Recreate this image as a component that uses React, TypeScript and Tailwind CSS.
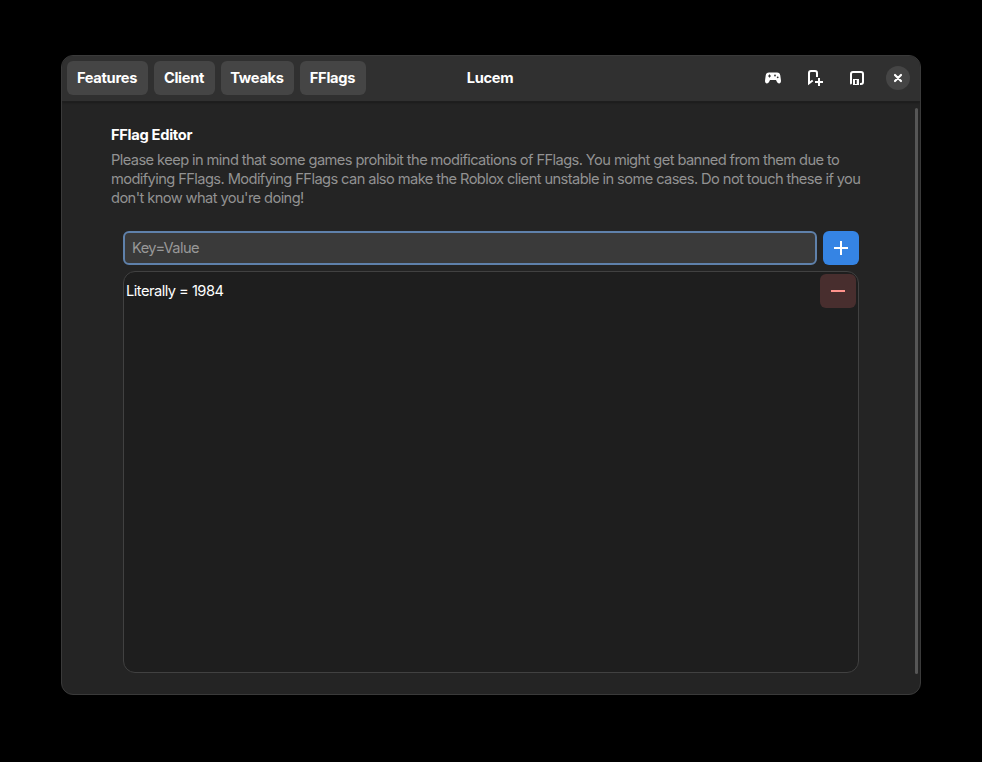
const tabs = [
  { label: 'Features', width: 'w-[81px]' },
  { label: 'Client', width: 'w-[61px]' },
  { label: 'Tweaks', width: 'w-[73px]' },
  { label: 'FFlags', width: 'w-[66px]' },
];

function GamepadIcon() {
  return (
    <svg width="16" height="16" viewBox="0 0 16 16" fill="none">
      <path
        d="M4 2.500h8c2 0 3 1 3.300 3l.6 4.500c.3 2-.4 3.400-1.800 3.400-1 0-1.600-.5-2.100-1.400L11 10H5l-1 2c-.5.900-1.100 1.400-2.100 1.400C.5 13.400-.2 12 .1 10l.6-4.500C1 3.500 2 2.500 4 2.500Z"
        fill="#fff"
      />
      <path d="M4.500 4.500v3M3 6h3" stroke="#303030" strokeWidth="1" />
      <circle cx="10" cy="5.500" r=".9" fill="#303030" />
      <circle cx="12.700" cy="7.300" r=".9" fill="#303030" />
    </svg>
  );
}

function BookmarkAddIcon() {
  return (
    <svg width="16" height="16" viewBox="0 0 16 16" fill="none" stroke="#fff" strokeWidth="2">
      <path d="M10 7V3a2 2 0 0 0-2-2H4a2 2 0 0 0-2 2v10.200L5.700 10.500" />
      <path d="M12 8v8M8 12h8" />
    </svg>
  );
}

function WindowIcon() {
  return (
    <svg width="16" height="16" viewBox="0 0 16 16" fill="none" stroke="#fff">
      <path d="M2.500 14A1.500 1.500 0 0 1 2 12.500V4a2 2 0 0 1 2-2h8a2 2 0 0 1 2 2v8a2 2 0 0 1-2 2h-1" strokeWidth="2" />
      <path d="M4 9h6v6H4Z" fill="#fff" stroke="none" />
      <path d="M6 10h1.700v4H6Z" fill="#303030" stroke="none" />
    </svg>
  );
}

export default function App() {
  return (
    <div className="flex h-[762px] w-[982px] items-start bg-black pt-[55px] pl-[61px] font-['Inter',sans-serif] text-[14.67px] leading-[19px] text-white">
      <div className="flex h-[640px] w-[860px] flex-col overflow-hidden rounded-xl border border-[#3a3a3a] bg-[#242424]">
        <header className="grid h-[46px] shrink-0 grid-cols-[1fr_auto_1fr] items-center border-b border-[#1e1e1e] bg-[#303030] pr-2.5 pb-px pl-[5px] font-bold tracking-[-0.3px] shadow-[0_1px_2px_rgba(0,0,0,0.25)]">
          <nav className="flex gap-1.5">
            {tabs.map((tab) => (
              <button
                key={tab.label}
                className={`h-[34px] shrink-0 rounded-[6px] bg-[#454545] pr-px text-center ${tab.width}`}
              >
                {tab.label}
              </button>
            ))}
          </nav>
          <h1 className="pl-[3px]">Lucem</h1>
          <div className="flex items-center justify-end">
            <button className="mr-[26px]"><GamepadIcon /></button>
            <button className="mr-[26px]"><BookmarkAddIcon /></button>
            <button className="mr-[21px]"><WindowIcon /></button>
            <button className="flex size-6 items-center justify-center rounded-full bg-[#454545]">
              <svg width="16" height="16" viewBox="0 0 16 16" fill="none">
                <path d="m5 5 6 6M11 5l-6 6" stroke="#fff" strokeWidth="2.200" strokeLinecap="round" />
              </svg>
            </button>
          </div>
        </header>
        <div className="flex flex-1 justify-between pr-[2px] pl-[49px] tracking-[-0.59px]">
          <main className="flex w-[750px] flex-col pt-6">
            <h2 className="font-bold tracking-[-0.3px]">FFlag Editor</h2>
            <p className="mt-[6px] whitespace-nowrap text-[#929292]">
              Please keep in mind that some games prohibit the modifications of FFlags. You might get banned from them due to
              <br />
              modifying FFlags. Modifying FFlags can also make the Roblox client unstable in some cases. Do not touch these if you
              <br />
              don't know what you're doing!
            </p>
            <div className="mt-[23px] ml-3 flex gap-1.5">
              <input
                placeholder="Key=Value"
                className="h-[34px] w-[694px] rounded-[6px] border-2 border-[#5f81ab] bg-[#3a3a3a] px-[7px] outline-none placeholder:text-[#989898]"
              />
              <button className="flex h-[34px] w-9 items-center justify-center rounded-[6px] bg-[#3584e4]">
                <svg width="16" height="16" viewBox="0 0 16 16">
                  <path d="M8 1v14M1 8h14" stroke="#fff" strokeWidth="2" />
                </svg>
              </button>
            </div>
            <div className="mt-1.5 ml-3 h-[402px] w-[736px] rounded-xl border border-[#414141] bg-[#1e1e1e] p-0.5">
              <div className="flex items-center justify-between">
                <span className="tracking-[-0.52px]">Literally = 1984</span>
                <button className="flex h-[34px] w-9 items-center justify-center rounded-[6px] bg-[#482e2e]">
                  <svg width="16" height="16" viewBox="0 0 16 16">
                    <path d="M1 8h14" stroke="#ff938c" strokeWidth="2" />
                  </svg>
                </button>
              </div>
            </div>
          </main>
          <div className="mt-[6px] h-[566px] w-[3px] rounded-full bg-[#565656]" />
        </div>
      </div>
    </div>
  );
}
